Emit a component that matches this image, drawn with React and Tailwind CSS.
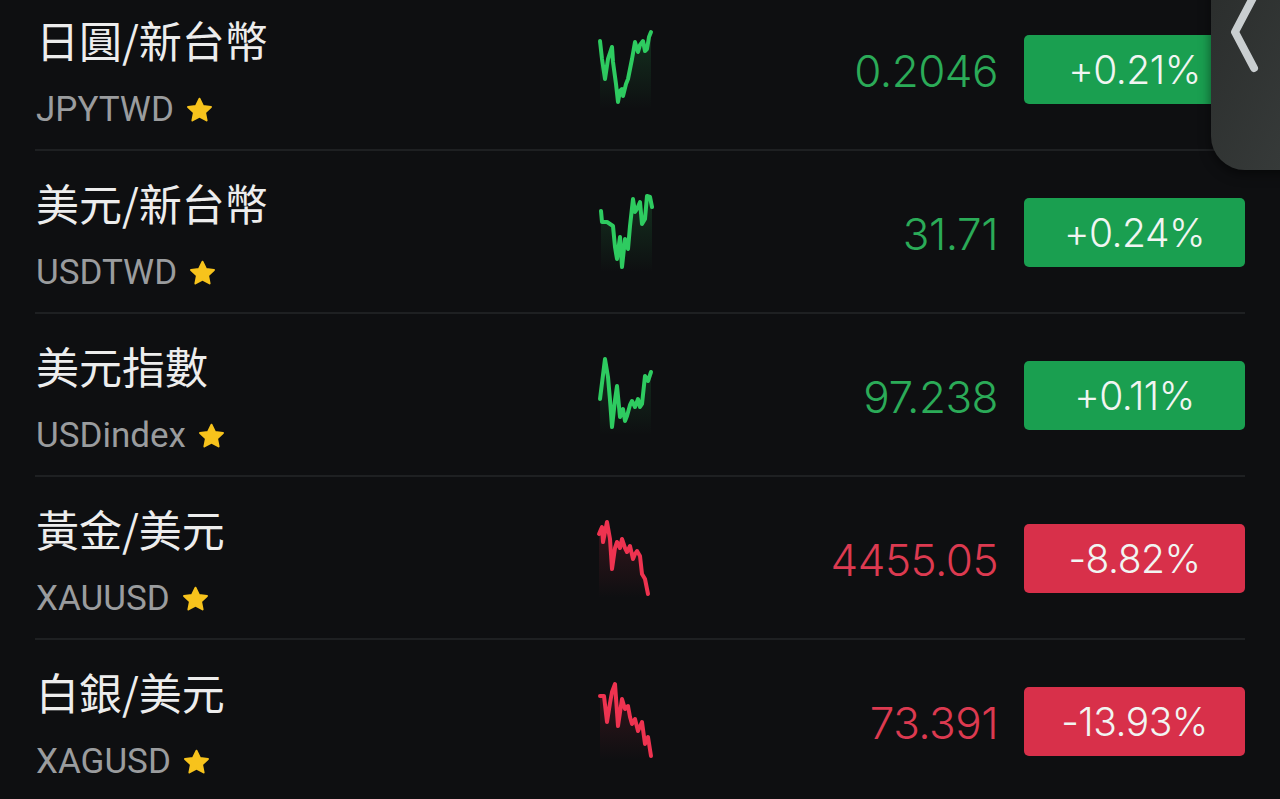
import React from 'react';

const rows = [
  {
    name: '日圓/新台幣',
    code: 'JPYTWD',
    price: '0.2046',
    change: '+0.21%',
    up: true,
    pts: [[4, 12], [6, 30], [9, 50], [12, 30], [16, 18], [17, 33], [20, 55], [22, 73], [24, 62], [26, 60], [27, 67], [30, 55], [32, 50], [34, 40], [36, 30], [39, 13], [42, 23], [44, 16], [47, 12], [49, 22], [51, 20], [53, 8], [55, 3]],
  },
  {
    name: '美元/新台幣',
    code: 'USDTWD',
    price: '31.71',
    change: '+0.24%',
    up: true,
    pts: [[5, 19], [6, 30], [11, 30], [14, 32], [17, 34], [19, 55], [21, 67], [24, 45], [26, 75], [29, 47], [32, 57], [34, 34], [37, 7], [39, 20], [41, 17], [44, 10], [46, 32], [49, 27], [51, 4], [54, 5], [56, 15]],
  },
  {
    name: '美元指數',
    code: 'USDindex',
    price: '97.238',
    change: '+0.11%',
    up: true,
    pts: [[4, 44], [7, 20], [9, 4], [12, 22], [14, 45], [16, 72], [19, 45], [21, 31], [24, 62], [27, 54], [29, 66], [31, 61], [34, 50], [36, 46], [39, 52], [42, 44], [44, 52], [46, 49], [49, 21], [52, 26], [55, 17]],
  },
  {
    name: '黃金/美元',
    code: 'XAUUSD',
    price: '4455.05',
    change: '-8.82%',
    up: false,
    pts: [[3, 16], [6, 9], [7, 24], [11, 4], [14, 21], [16, 51], [19, 30], [21, 24], [24, 30], [26, 21], [29, 30], [31, 34], [34, 28], [37, 41], [39, 36], [41, 33], [44, 38], [46, 56], [49, 61], [52, 76]],
  },
  {
    name: '白銀/美元',
    code: 'XAGUSD',
    price: '73.391',
    change: '-13.93%',
    up: false,
    pts: [[4, 15], [8, 15], [11, 41], [14, 22], [16, 11], [19, 3], [22, 45], [26, 18], [29, 28], [32, 25], [34, 36], [36, 43], [39, 38], [42, 50], [46, 41], [49, 63], [52, 56], [55, 75]],
  },
];

const Sparkline = ({ pts, up, id }) => {
  const color = up ? '#2ecb60' : '#ee3350';
  const line = pts.map(([x, y]) => `${x},${y}`).join(' ');
  const area = `M${pts[0][0]},80 L${pts.map(([x, y]) => `${x},${y}`).join(' L')} L${pts[pts.length - 1][0]},80 Z`;
  return (
    <svg width="60" height="80" viewBox="0 0 60 80">
      <defs>
        <linearGradient id={id} x1="0" y1="0" x2="0" y2="1">
          <stop offset="0%" stopColor={color} stopOpacity="0.18" />
          <stop offset="100%" stopColor={color} stopOpacity="0" />
        </linearGradient>
      </defs>
      <path d={area} fill={`url(#${id})`} />
      <polyline points={line} fill="none" stroke={color} strokeWidth="4" strokeLinejoin="round" strokeLinecap="round" />
    </svg>
  );
};

const Star = () => (
  <svg width="29" height="29" viewBox="0 0 24 24" className="ml-[11px]">
    <path
      d="M12 2.2l2.9 6.1 6.6.8-4.9 4.6 1.3 6.6L12 17l-5.9 3.3 1.3-6.6-4.9-4.6 6.6-.8z"
      fill="#f7c31c"
      stroke="#f7c31c"
      strokeWidth="1.6"
      strokeLinejoin="round"
    />
  </svg>
);

const Row = ({ row, idx }) => (
  <div className="mx-[35px] h-[163px] flex items-center border-b-2 border-[#1e2022]">
    <div className="w-[561px] h-full flex flex-col pt-[27px] pl-[1px]">
      <div className="text-[43px] leading-[48px] text-[#ededed] font-['Noto_Sans_CJK_TC',sans-serif]">
        {row.name}
      </div>
      <div className="mt-[27px] flex items-center h-[40px]">
        <span className="text-[35px] leading-[40px] text-[#9a9c9e] font-['Roboto',sans-serif]">{row.code}</span>
        <Star />
      </div>
    </div>
    <div className="w-[60px] flex items-center">
      <Sparkline pts={row.pts} up={row.up} id={`g${idx}`} />
    </div>
    <div
      className={`flex-1 text-right text-[44px] leading-none pt-[5px] font-light tracking-[-0.5px] font-['Inter',sans-serif] ${
        row.up ? 'text-[#2bab58]' : 'text-[#dc3a50]'
      }`}
    >
      {row.price}
    </div>
    <div
      className={`ml-[26px] mt-[2px] w-[221px] h-[69px] rounded-[5px] flex items-center justify-center pt-[2px] text-[39px] font-light tracking-[-0.5px] text-[#f1f5f2] font-['Inter',sans-serif] ${
        row.up ? 'bg-[#1a9f50]' : 'bg-[#d8304a]'
      }`}
    >
      {row.change}
    </div>
  </div>
);

export default function App() {
  return (
    <div className="relative w-[1280px] h-[799px] overflow-hidden bg-[#0e0f11]">
      <div className="mt-[-12px]">
        {rows.map((row, i) => (
          <Row key={row.code} row={row} idx={i} />
        ))}
      </div>
      <div className="absolute left-[1211px] top-[-40px] w-[110px] h-[210px] rounded-bl-[34px] bg-gradient-to-br from-[#2a2d2c] to-[#393d3c] shadow-[0_4px_12px_rgba(0,0,0,0.5)]">
        <svg width="40" height="100" viewBox="0 0 40 100" className="ml-[18px] mt-[28px]">
          <path d="M26 6 L6 44 L25 80" fill="none" stroke="#c9ced0" strokeWidth="8" strokeLinecap="round" strokeLinejoin="round" />
        </svg>
      </div>
    </div>
  );
}
